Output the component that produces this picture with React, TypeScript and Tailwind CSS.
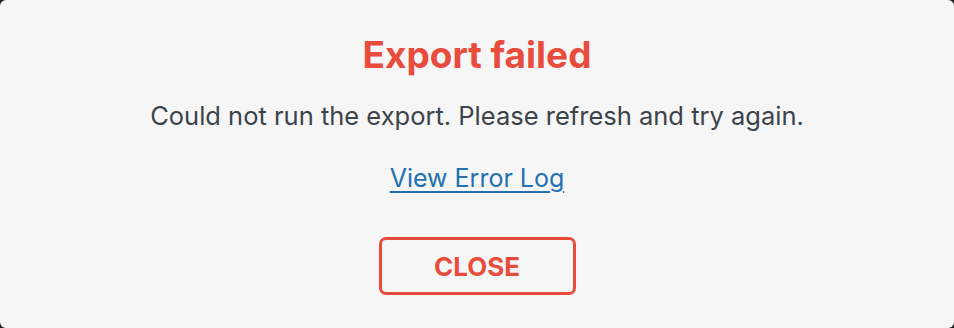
export default function App() {
  return (
    <div className="w-[954px] h-[328px] bg-[#1d2327]" style={{ fontFamily: "Inter, 'Noto Sans', sans-serif" }}>
      <div className="w-full h-full bg-[#f6f6f6] rounded-[6px] flex flex-col items-center pt-[33px]">
        <h1 className="text-[37px] leading-[44px] font-bold text-[#e74c3c]">Export failed</h1>
        <p className="mt-[24px] text-[25.5px] leading-[30px] text-[#3c434a]">Could not run the export. Please refresh and try again.</p>
        <a href="#" className="mt-[32px] text-[25px] leading-[30px] text-[#2271b1] underline underline-offset-[4px]">View Error Log</a>
        <button className="mt-[44px] w-[197px] h-[58px] border-[3px] border-[#e74c3c] rounded-[7px] text-[26px] font-bold text-[#e74c3c] flex items-center justify-center">CLOSE</button>
      </div>
    </div>
  );
}
